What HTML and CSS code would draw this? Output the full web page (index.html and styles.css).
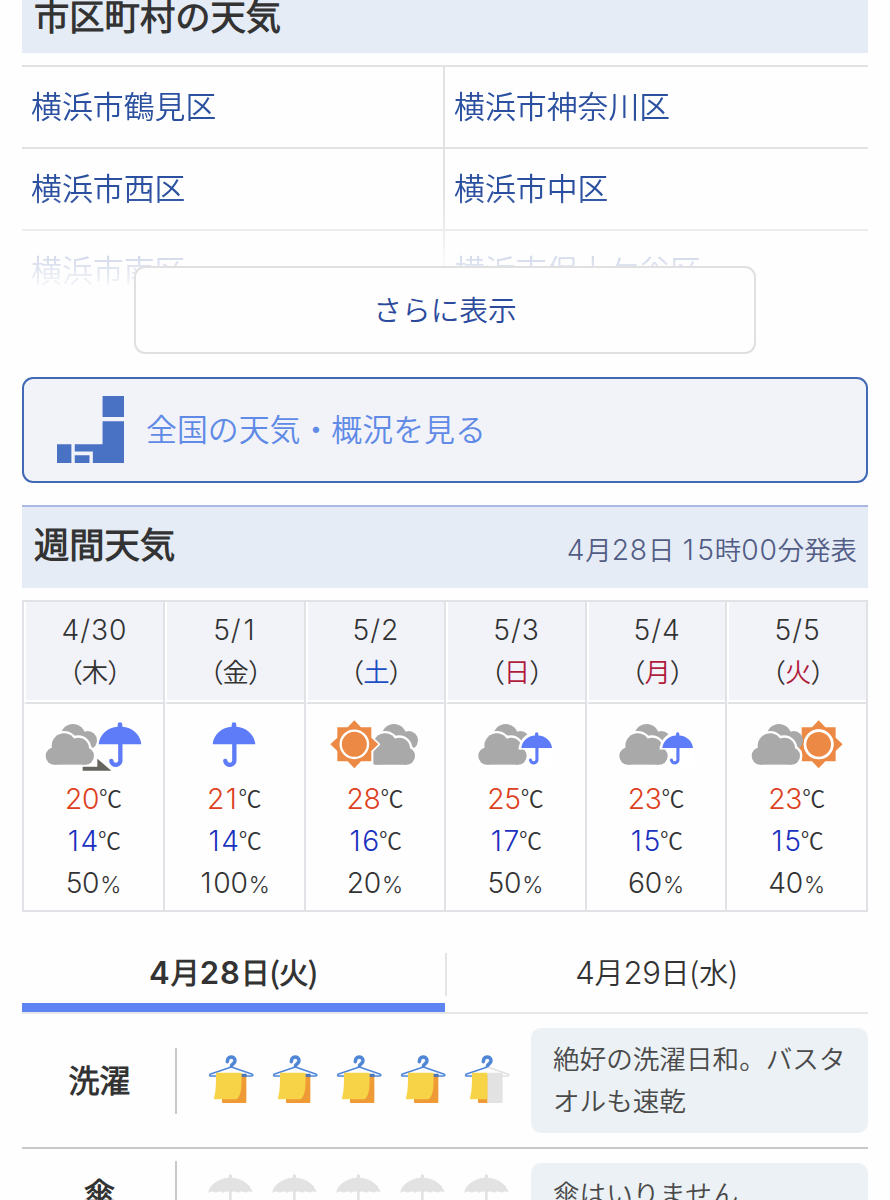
FILE: index.html
```html
<!DOCTYPE html>
<html lang="ja">
<head>
<meta charset="utf-8">
<title>週間天気</title>
<link rel="stylesheet" href="styles.css">
</head>
<body>
<svg class="defs" width="0" height="0">
  <defs>
    <g id="cloud">
      <g fill="#a9a9a9">
        <circle cx="82" cy="107" r="37"/><circle cx="126" cy="119" r="28"/><path d="M70 100h60l20 34-22 18H90z"/>
      </g>
      <g stroke="#fff" stroke-width="14" fill="#fff">
        <circle cx="26" cy="166" r="26"/><circle cx="55" cy="135" r="37"/><circle cx="98" cy="143" r="32"/><circle cx="119" cy="166" r="26"/><path d="M26 150h93v42H26z"/>
      </g>
      <g fill="#a9a9a9">
        <circle cx="26" cy="166" r="26"/><circle cx="55" cy="135" r="37"/><circle cx="98" cy="143" r="32"/><circle cx="119" cy="166" r="26"/><path d="M26 150h93v42H26z"/>
      </g>
    </g>
    <g id="umbrella">
      <path d="M0 131C2 101 29 79 57 78v-6a7 7 0 0 1 14 0v6c28 1 55 23 57 53z" fill="#5e7cf7"/>
      <path d="M65 125v52a13.500 13.500 0 0 1-27 4" fill="none" stroke="#5e7cf7" stroke-width="13" stroke-linecap="round"/>
    </g>
    <g id="sun">
      <path d="M0-72 20-51H51V-20L72 0 51 20V51H20L0 72-20 51H-51V20L-72 0-51-20V-51H-20Z" fill="#ec8a45" stroke="#fff" stroke-width="10" paint-order="stroke" stroke-linejoin="round"/>
      <circle r="41" fill="none" stroke="#fff" stroke-width="7"/>
    </g>
    <g id="hanger">
      <path d="M94 78 30 100c-2 4 0 5 3 5h121c4 0 6-2 3-5L94 78" fill="none" stroke="currentColor" stroke-width="5" stroke-linejoin="round"/>
      <path d="M82 62c-1-18 23-18 23-3 0 10-10 8-11 17" fill="none" stroke="currentColor" stroke-width="10.500" stroke-linecap="round"/>
    </g>
    <g id="towel">
      <path d="M66 108h73v76q0 2-2 2H68q-2 0-2-2z" fill="#f09a35"/>
      <path d="M122 98h15q3 0 3 3v7h-18z" fill="#4f76b8"/>
      <path d="M48 98q0-3 3-3h70q4 0 4 4c0 30 0 58-11 72q-3 4-7 4H45q-4 0-3-4c6-20 6-45 6-73z" fill="#f7d348"/>
    </g>
    <clipPath id="left"><path d="M0 0h194v78H94v122H0z"/></clipPath>
    <clipPath id="right"><path d="M94 78h100v122H94z"/></clipPath>
    <symbol id="laundry" viewBox="24 42 144 150"><g color="#4f86d6"><use href="#hanger"/></g><use href="#towel"/></symbol>
    <symbol id="laundry-half" viewBox="24 42 144 150">
      <g clip-path="url(#right)" color="#e2e2e2"><use href="#hanger"/><path d="M90 95h50v89q0 2-2 2H90z" fill="#e2e2e2"/></g>
      <g clip-path="url(#left)" color="#4f86d6"><use href="#hanger"/><use href="#towel"/></g>
    </symbol>
    <symbol id="no-umbrella" viewBox="24 42 144 150">
      <path d="M24 107C30 82 55 65 86 62v-5a5 5 0 0 1 10 0v5c31 3 56 20 62 45q-11-7-22 0-11-7-22 0-11-7-22 0-11-7-22 0-12-7-23 0-12-7-23 0z" fill="#e2e2e2"/>
      <path d="M91 100v54a10 10 0 0 1-20 2" fill="none" stroke="#e2e2e2" stroke-width="8"/>
    </symbol>
  </defs>
</svg>
<main class="page">
  <h2 class="heading heading-top">市区町村の天気</h2>
  <div class="areas">
    <a>横浜市鶴見区</a><a>横浜市神奈川区</a>
    <a>横浜市西区</a><a>横浜市中区</a>
    <a>横浜市南区</a><a>横浜市保土ケ谷区</a>
  </div>
  <a class="more">さらに表示</a>
  <a class="national">
    <svg width="67" height="67" viewBox="0 0 200 200" fill="#4a72c4"><path d="M136 0h64v63h-64zM136 75h64v125h-93v-34H53v-22h83zM0 144h43v56H0zM53 177h44v23H53z"/></svg>
    <span>全国の天気・概況を見る</span>
  </a>
  <header class="heading heading-week">
    <h2>週間天気</h2>
    <p><b>4</b>月<b>28</b>日 <b><u>1</u>5</b>時<b>00</b>分発表</p>
  </header>
  <div class="week">
    <div class="day"><div class="date"><b>4/30</b><span>（木）</span></div><div class="cell">
      <svg class="wx" viewBox="-150 55 300 165"><use href="#cloud" x="-145"/><path d="M-34 198h44v-24l42 36h-86z" fill="#66665f" stroke="#fff" stroke-width="8" paint-order="stroke"/><use href="#umbrella" x="14"/></svg>
      <p class="hi"><b>20</b><i>℃</i></p><p class="lo"><b><u>1</u>4</b><i>℃</i></p><p><b>50</b><i class="pc">%</i></p></div></div>
    <div class="day"><div class="date"><b>5/<u>1</u></b><span>（金）</span></div><div class="cell">
      <svg class="wx" viewBox="-150 55 300 165"><use href="#umbrella" x="-64"/></svg>
      <p class="hi"><b>2<u>1</u></b><i>℃</i></p><p class="lo"><b><u>1</u>4</b><i>℃</i></p><p><b><u>1</u>00</b><i class="pc">%</i></p></div></div>
    <div class="day"><div class="date"><b>5/2</b><span>（<em class="sat">土</em>）</span></div><div class="cell">
      <svg class="wx" viewBox="-150 55 300 165"><clipPath id="c3"><path d="M-5 50h150v160H-5z"/></clipPath><g clip-path="url(#c3)"><use href="#cloud" x="-25"/></g><use href="#sun" x="-62" y="131"/></svg>
      <p class="hi"><b>28</b><i>℃</i></p><p class="lo"><b><u>1</u>6</b><i>℃</i></p><p><b>20</b><i class="pc">%</i></p></div></div>
    <div class="day"><div class="date"><b>5/3</b><span>（<em class="hol">日</em>）</span></div><div class="cell">
      <svg class="wx" viewBox="-150 55 300 165"><use href="#cloud" x="-110"/><g transform="translate(19 48) scale(.72)"><path d="M-6 137C-4 95 29 70 64 70s68 25 70 67" fill="#fff" stroke="#fff" stroke-width="12"/><path d="M30 137h104v70H30z" fill="#fff"/><use href="#umbrella"/></g></svg>
      <p class="hi"><b>25</b><i>℃</i></p><p class="lo"><b><u>1</u>7</b><i>℃</i></p><p><b>50</b><i class="pc">%</i></p></div></div>
    <div class="day"><div class="date"><b>5/4</b><span>（<em class="hol">月</em>）</span></div><div class="cell">
      <svg class="wx" viewBox="-150 55 300 165"><use href="#cloud" x="-110"/><g transform="translate(19 48) scale(.72)"><path d="M-6 137C-4 95 29 70 64 70s68 25 70 67" fill="#fff" stroke="#fff" stroke-width="12"/><path d="M30 137h104v70H30z" fill="#fff"/><use href="#umbrella"/></g></svg>
      <p class="hi"><b>23</b><i>℃</i></p><p class="lo"><b><u>1</u>5</b><i>℃</i></p><p><b>60</b><i class="pc">%</i></p></div></div>
    <div class="day"><div class="date"><b>5/5</b><span>（<em class="hol">火</em>）</span></div><div class="cell">
      <svg class="wx" viewBox="-150 55 300 165"><use href="#sun" x="65" y="131"/><use href="#cloud" x="-136"/><circle cx="65" cy="131" r="45" fill="#fff"/><circle cx="65" cy="131" r="37" fill="#ec8a45"/></svg>
      <p class="hi"><b>23</b><i>℃</i></p><p class="lo"><b><u>1</u>5</b><i>℃</i></p><p><b>40</b><i class="pc">%</i></p></div></div>
  </div>
  <nav class="tabs">
    <a class="tab active"><b>4</b>月<b>28</b>日(火)</a>
    <a class="tab"><b>4</b>月<b>29</b>日(水)</a>
  </nav>
  <section class="index">
    <h3>洗濯</h3>
    <div class="marks"><svg><use href="#laundry"/></svg><svg><use href="#laundry"/></svg><svg><use href="#laundry"/></svg><svg><use href="#laundry"/></svg><svg><use href="#laundry-half"/></svg></div>
    <p class="note">絶好の洗濯日和。バスタオルも速乾</p>
  </section>
  <section class="index">
    <h3>傘</h3>
    <div class="marks umb"><svg><use href="#no-umbrella"/></svg><svg><use href="#no-umbrella"/></svg><svg><use href="#no-umbrella"/></svg><svg><use href="#no-umbrella"/></svg><svg><use href="#no-umbrella"/></svg></div>
    <p class="note">傘はいりません</p>
  </section>
</main>
</body>
</html>
```
FILE: styles.css
```css
* { box-sizing: border-box; }
html, body { margin: 0; height: 1200px; overflow: hidden; background: #fefefe; }
body { font-family: "Noto Sans CJK JP DemiLight", "Noto Sans CJK JP", sans-serif; font-weight: 350; color: #333; }
h2, h3, p { margin: 0; }
b, i, em { font-weight: inherit; font-style: normal; }
b { font-family: Inter, sans-serif; font-weight: 300; font-size: 1.07em; letter-spacing: -0.01em; }
u { text-decoration: none; padding: 0 .07em 0 .06em; }
.defs { position: absolute; }
.page { width: 846px; margin: 0 auto; }

.heading { background: #e5ecf5; font-size: 35.3px; font-weight: 700; padding: 0 12px; }
.heading-top { height: 53px; line-height: 29px; }
.heading-week { height: 83px; border-top: 2px solid #a9b8e0; display: flex; justify-content: space-between; line-height: 72px; }
.heading-week h2 { font-size: 35.3px; font-weight: 700; }
.heading-week p { font-size: 26.4px; font-weight: 350; line-height: 84px; color: #525c85; margin-right: -1px; }
.heading-week b { letter-spacing: .03em; }
.heading-week u { padding: 0 .09em 0 .09em; }

.areas { margin-top: 12px; height: 222px; overflow: hidden; display: grid; grid-template-columns: 1fr 1fr; grid-auto-rows: 82px; font-size: 30.9px; line-height: 75px; color: #2b50a0;
  -webkit-mask-image: linear-gradient(#000 130px, rgba(0,0,0,.62) 165px, rgba(0,0,0,.2) 192px, rgba(0,0,0,.05) 221px); mask-image: linear-gradient(#000 130px, rgba(0,0,0,.62) 165px, rgba(0,0,0,.2) 192px, rgba(0,0,0,.05) 221px); }
.areas a { border-top: 2px solid #e2e2e2; padding-left: 9px; }
.areas a:nth-child(odd) { border-right: 2px solid #e2e2e2; }
.more { display: block; position: relative; width: 622px; height: 88px; margin: -21px auto 0; border: 2px solid #e0e0e0; border-radius: 11px; background: #fefefe; text-align: center; font-size: 28.7px; line-height: 82px; font-weight: 400; color: #2b4a9c; }
.national { display: flex; align-items: center; gap: 22px; height: 106px; margin: 22.500px 0; padding-left: 33px; border: 2px solid #4169b4; border-radius: 11px; background: #f2f3f9; color: #5f8ae6; font-size: 30.9px; }
.national span { line-height: 60px; padding-bottom: 4px; }

.week { margin-top: 12px; height: 312px; display: grid; grid-template-columns: 141px repeat(4, 140.6px) 1fr; border: 2px solid #e1e2e5; font-size: 26.4px; text-align: center; line-height: 42px; }
.day:not(:last-child) { border-right: 2px solid #e1e2e5; }
.date { height: 102px; background: #f2f3f9; border-left: 2px solid #fff; border-bottom: 2px solid #e1e2e5; box-shadow: inset 0 -2px #fff; padding-top: 7px; display: flex; flex-direction: column; align-items: center; }
.date b { line-height: 42px; letter-spacing: .035em; }
.date span { line-height: 39px; letter-spacing: -1px; }
.sat { color: #1d4fc4; }
.hol { color: #b01c3c; }
.cell { padding-top: 15px; }
.wx { display: block; width: 100px; height: 55px; margin: 0 auto 3px; }
.cell p { height: 42px; white-space: nowrap; }
.hi b { color: #dd4020; }
.lo b { color: #1a30c0; }
.cell i { font-size: 23px; line-height: 1; position: relative; top: -2px; }
.cell i.pc { font-family: Inter, sans-serif; font-weight: 300; font-size: 22.500px; top: 0; padding-left: 1px; }

.tabs { display: grid; grid-template-columns: 1fr 1fr; margin-top: 24px; height: 78px; border-bottom: 2px solid #e6e6e6; font-size: 29px; text-align: center; }
.tab { height: 76px; line-height: 71px; position: relative; }
.tab.active { font-weight: 700; border-bottom: 9px solid #5d84f2; }
.tab.active b { font-weight: 600; letter-spacing: .03em; }
.tab:not(.active)::before { content: ""; position: absolute; left: 0; top: 17px; width: 2px; height: 43px; background: #e4e4e4; }

.index { display: grid; grid-template-columns: 153px 1fr 337px; align-items: center; padding: 14px 0; }
.index + .index { border-top: 2px solid #c9c9c9; padding-top: 12px; }
.index h3 { font-size: 30.9px; font-weight: 700; text-align: center; line-height: 60px; padding: 0 0 4px 2px; }
.marks { border-left: 2px solid #c9c9c9; height: 66px; display: flex; align-items: center; gap: 16px; padding: 0 0 2px 31px; }
.marks svg { width: 48px; height: 50px; flex: none; }
.marks.umb { padding-top: 5px; }
.note { background: #ebf1f4; border-radius: 10px; padding: 9px 22px 12px; font-size: 26.6px; line-height: 42px; color: #4a4a4a; }
```
